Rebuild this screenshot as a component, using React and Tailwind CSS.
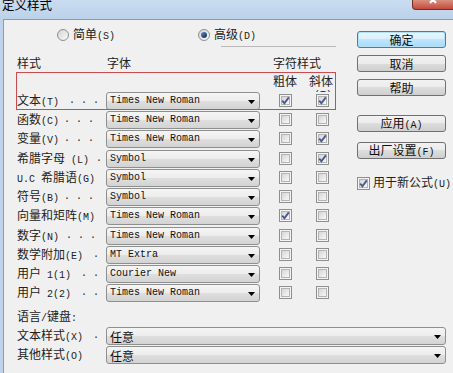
import React from "react";

const CJK = /[\u2E80-\u9FFF\uFF00-\uFFEF]/;

function T({ text }) {
  const parts = text.match(/[\u2E80-\u9FFF\uFF00-\uFFEF]+|[^\u2E80-\u9FFF\uFF00-\uFFEF]+/g) || [];
  return (
    <span className="whitespace-pre">
      {parts.map((p, i) =>
        CJK.test(p) ? (
          <span key={i} className="font-['Noto_Sans_CJK_SC',sans-serif] text-[12px]">
            {p}
          </span>
        ) : (
          <span key={i} className="font-['Liberation_Mono',monospace] text-[10px]">
            {p}
          </span>
        )
      )}
    </span>
  );
}

function Arrow() {
  return (
    <svg width="7" height="4" viewBox="0 0 7 4" className="shrink-0 mt-[1px]">
      <path d="M0 0H7L3.5 4Z" fill="#000" />
    </svg>
  );
}

function Combo({ text, w, cjk }) {
  return (
    <div
      className={`${w} h-[18px] shrink-0 flex items-center justify-between rounded-[3px] border border-[#8e8f8f] bg-[linear-gradient(to_bottom,#f5f5f5_0%,#ececec_50%,#dfdfdf_50%,#d3d3d3_100%)] pl-[3px] pr-[4px] text-[#111] leading-[14px]`}
    >
      {cjk ? <T text={text} /> : <span className="font-['Liberation_Mono',monospace] text-[10px] whitespace-pre">{text}</span>}
      <Arrow />
    </div>
  );
}

function Check({ checked }) {
  return (
    <div className="w-[13px] h-[13px] shrink-0 border border-[#8e8f8f] bg-[#f4f4f4] p-[1px]">
      <div className="w-full h-full border border-[#b4b4b4] bg-gradient-to-br from-[#d6d6d6] to-[#f8f8f8] flex items-center justify-center">
        {checked && (
          <svg width="9" height="9" viewBox="0 0 9 9" className="shrink-0">
            <path d="M1.2 4.6L3.4 7.2L7.8 1.4" stroke="#4b5a8e" strokeWidth="1.9" fill="none" />
          </svg>
        )}
      </div>
    </div>
  );
}

function Radio({ checked }) {
  return (
    <div className="w-[12px] h-[12px] shrink-0 rounded-full border border-[#8e8f8f] bg-gradient-to-br from-[#d4d4d4] to-[#fafafa] flex items-center justify-center">
      {checked && <div className="w-[6px] h-[6px] rounded-full bg-gradient-to-br from-[#5f8fcc] to-[#13284f]" />}
    </div>
  );
}

function Btn({ text, def }) {
  return (
    <div
      className={
        def
          ? "w-[89px] h-[17px] rounded-[3px] border border-[#3c7fb1] shadow-[inset_0_0_0_1px_#b6e0f7] bg-[linear-gradient(to_bottom,#eaf6fd_0%,#d9f0fc_50%,#bee6fd_50%,#a7d9f5_100%)] flex items-center justify-center leading-[14px] text-[#111]"
          : "w-[89px] h-[17px] rounded-[3px] border border-[#707070] bg-[linear-gradient(to_bottom,#f2f2f2_0%,#ebebeb_50%,#dddddd_50%,#cfcfcf_100%)] flex items-center justify-center leading-[14px] text-[#111]"
      }
    >
      <T text={text} />
    </div>
  );
}

const rows = [
  { label: "文本(T)", dots: ". . .", pr: "pr-[7px]", font: "Times New Roman", b: true, i: true, h: "h-[19px]" },
  { label: "函数(C)", dots: ". . .", pr: "pr-[12px]", font: "Times New Roman", b: false, i: false, h: "h-[19px]" },
  { label: "变量(V)", dots: ". . .", pr: "pr-[12px]", font: "Times New Roman", b: false, i: true, h: "h-[20px]" },
  { label: "希腊字母 (L)", dots: ".", pr: "pr-[4px]", font: "Symbol", b: false, i: true, h: "h-[19px]" },
  { label: "U.C 希腊语(G)", dots: "", pr: "pr-[7px]", font: "Symbol", b: false, i: false, h: "h-[19px]" },
  { label: "符号(B)", dots: ". . .", pr: "pr-[12px]", font: "Symbol", b: false, i: false, h: "h-[19px]" },
  { label: "向量和矩阵(M)", dots: "", pr: "pr-[7px]", font: "Times New Roman", b: true, i: false, h: "h-[20px]" },
  { label: "数字(N)", dots: ". . .", pr: "pr-[10px]", font: "Times New Roman", b: false, i: false, h: "h-[19px]" },
  { label: "数学附加(E)", dots: ".", pr: "pr-[7px]", font: "MT Extra", b: false, i: false, h: "h-[19px]" },
  { label: "用户 1(1)", dots: ". .", pr: "pr-[7px]", font: "Courier New", b: false, i: false, h: "h-[19px]" },
  { label: "用户 2(2)", dots: ". .", pr: "pr-[7px]", font: "Times New Roman", b: false, i: false, h: "h-[19px]" },
];

function Label({ label, dots, pr }) {
  return (
    <div className={`w-[89px] h-[18px] shrink-0 flex items-center ${pr} text-[#222] leading-[14px]`}>
      <T text={label} />
      <div className="flex-1" />
      {dots && <span className="font-['Liberation_Mono',monospace] text-[10px] whitespace-pre">{dots}</span>}
    </div>
  );
}

export default function App() {
  return (
    <div className="w-[453px] h-[373px] overflow-hidden flex flex-col bg-[#bfd4eb] text-[#222]">
      {/* title bar */}
      <div className="h-[19px] shrink-0 flex items-start justify-between bg-gradient-to-b from-[#c9dcf1] to-[#bcd2ea]">
        <span className="pl-[2px] -mt-[2px] font-['Noto_Sans_CJK_SC',sans-serif] text-[12.5px] leading-[13px] text-black">
          定义样式
        </span>
        <div className="w-[41px] h-[10px] rounded-bl-[4px] border-l border-b border-[#7a2b22] bg-gradient-to-b from-[#d88f80] to-[#c4483a] flex justify-center overflow-hidden">
          <svg width="12" height="9" viewBox="0 0 12 9" className="shrink-0 -mt-[1px] ml-[2px]">
            <path d="M2 -3L8 4M8 -3L2 4" stroke="#fff" strokeWidth="2.2" fill="none" />
          </svg>
        </div>
      </div>

      {/* body */}
      <div className="flex-1 flex pl-[3px]">
        <div className="relative flex-1 flex flex-col bg-[#f0f0f0] border-l border-t border-[#8d9aab]">
          {/* annotation rectangle */}
          <div className="absolute left-[12px] top-[52px] w-[320px] h-[38px] border border-[#cc4a50] pointer-events-none" />

          <div className="flex items-start">
            {/* left form */}
            <div className="w-[353px] shrink-0 pl-[13px] flex flex-col">
              {/* radios */}
              <div className="mt-[9px] h-[12px] flex items-center leading-[14px]">
                <div className="ml-[40px] w-[141px] flex items-center gap-[4px]">
                  <Radio />
                  <T text="简单(S)" />
                </div>
                <div className="flex items-center gap-[4px]">
                  <Radio checked />
                  <T text="高级(D)" />
                </div>
              </div>
              <div className="mt-[5px] ml-[204px] w-[115px] h-[1px] bg-[#b9b9b9]" />

              {/* headers */}
              <div className="mt-[8px] h-[14px] flex items-center leading-[14px]">
                <span className="w-[90px]"><T text="样式" /></span>
                <span className="w-[166px]"><T text="字体" /></span>
                <span className="mt-[1px]"><T text="字符样式" /></span>
              </div>
              <div className="mt-[4px] h-[19px] flex items-start leading-[14px]">
                <span className="ml-[256px] w-[36px] h-[14px] flex items-center"><T text="粗体" /></span>
                <div className="flex flex-col">
                  <span className="h-[14px] flex items-center"><T text="斜体" /></span>
                  <div className="h-[5px] overflow-hidden pl-[5px] leading-[10px]">
                    <span className="font-['Liberation_Mono',monospace] text-[10px]">(T)</span>
                  </div>
                </div>
              </div>

              {/* rows */}
              <div className="flex flex-col">
                {rows.map((r, idx) => (
                  <div key={idx} className={`${r.h} flex items-start`}>
                    <Label label={r.label} dots={r.dots} pr={r.pr} />
                    <Combo text={r.font} w="w-[154px]" />
                    <div className="ml-[19px] mt-[2px]"><Check checked={r.b} /></div>
                    <div className="ml-[24px] mt-[2px]"><Check checked={r.i} /></div>
                  </div>
                ))}
              </div>
            </div>

            {/* right buttons */}
            <div className="w-[89px] shrink-0 mt-[11px] flex flex-col">
              <Btn text="确定" def />
              <div className="mt-[7px]"><Btn text="取消" /></div>
              <div className="mt-[7px]"><Btn text="帮助" /></div>
              <div className="mt-[19px]"><Btn text="应用(A)" /></div>
              <div className="mt-[10px]"><Btn text="出厂设置(F)" /></div>
              <div className="mt-[15px] flex items-center gap-[3px] leading-[14px]">
                <Check checked />
                <T text="用于新公式(U)" />
              </div>
            </div>
          </div>

          {/* bottom */}
          <div className="pl-[13px] flex flex-col">
            <div className="mt-[7px] h-[14px] flex items-center leading-[14px]">
              <T text="语言/键盘:" />
            </div>
            <div className="mt-[3px] h-[19px] flex items-start">
              <Label label="文本样式(X)" dots="." pr="pr-[7px]" />
              <Combo text="任意" w="w-[340px]" cjk />
            </div>
            <div className="h-[19px] flex items-start">
              <Label label="其他样式(O)" dots="" pr="pr-[7px]" />
              <Combo text="任意" w="w-[340px]" cjk />
            </div>
          </div>
        </div>
      </div>
    </div>
  );
}
